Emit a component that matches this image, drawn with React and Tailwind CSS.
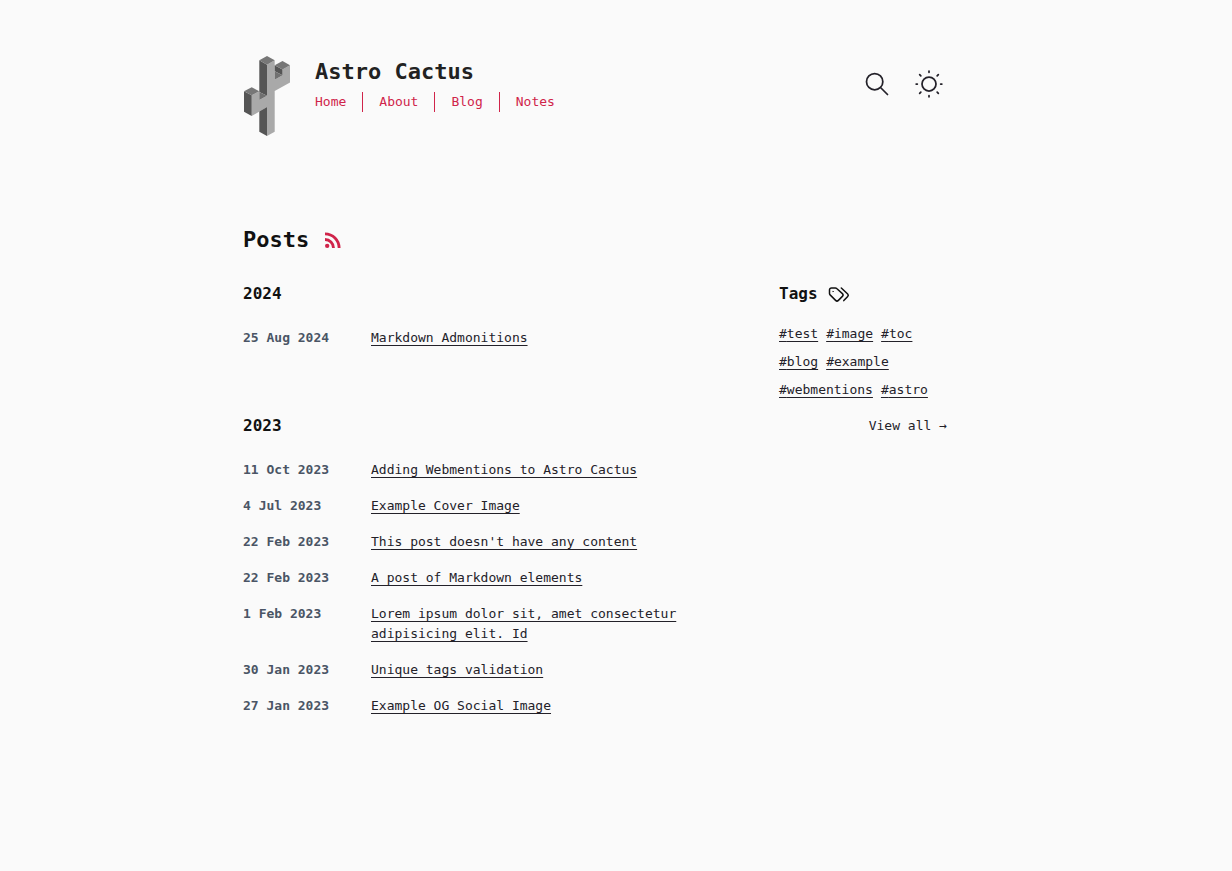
const FONT = "font-['DejaVu_Sans_Mono','Liberation_Mono',monospace]";

const nav = ["Home", "About", "Blog", "Notes"];

const groups = [
  { year: "2024", posts: [["25 Aug 2024", "Markdown Admonitions"]] },
  {
    year: "2023",
    posts: [
      ["11 Oct 2023", "Adding Webmentions to Astro Cactus"],
      ["4 Jul 2023", "Example Cover Image"],
      ["22 Feb 2023", "This post doesn't have any content"],
      ["22 Feb 2023", "A post of Markdown elements"],
      ["1 Feb 2023", "Lorem ipsum dolor sit, amet consectetur adipisicing elit. Id"],
      ["30 Jan 2023", "Unique tags validation"],
      ["27 Jan 2023", "Example OG Social Image"],
    ],
  },
];

const tags = ["test", "image", "toc", "blog", "example", "webmentions", "astro"];

const underlined = "underline decoration-1 underline-offset-3 [text-decoration-skip-ink:none]";

function Logo() {
  return (
    <svg viewBox="0 0 48 80" className="h-20 w-12 shrink-0" aria-hidden="true">
      <path fill="#a9a9a9" d="M24 8.700 31.700 4.300V23.700L39.500 19.300V13.500L47 9.300V26.500L31.700 35V75.700L24 80V51L8.700 60V39.300L16.300 35.300V44L24 39.800Z" />
      <path fill="#555" d="M16.300 4.300 24 8.700V39.800L16.300 36ZM16.300 55.500 24 51V80l-7.700-4.300Z" />
      <path fill="#555" d="M1 35.300 8.700 39.300V60L1 55.700Z" />
      <path fill="#555" d="M31.700 9.300 39.500 13.500v5.800L31.700 15.300Z" />
      <path fill="#777" d="M16.300 4.300 24 0l7.700 4.300L24 8.700ZM31.700 9.300 39.500 5 47 9.300 39.500 13.500ZM1 35.300 8.700 31.300l7.600 4L8.700 39.300Z" />
      <path fill="#707070" d="M16.300 36 24 39.800 16.300 44ZM31.700 15.300 39.500 19.300 31.700 23.700Z" />
    </svg>
  );
}

function SearchIcon() {
  return (
    <svg viewBox="0 0 24 24" className="size-7" fill="none" stroke="currentColor" strokeWidth="1.5" strokeLinecap="round" strokeLinejoin="round" aria-hidden="true">
      <path d="M3 10a7 7 0 1 0 14 0 7 7 0 1 0-14 0M21 21l-6-6" />
    </svg>
  );
}

function SunIcon() {
  return (
    <svg viewBox="0 0 24 24" className="size-7" fill="none" stroke="currentColor" strokeWidth="1.5" strokeLinecap="round" strokeLinejoin="round" aria-hidden="true">
      <circle cx="12" cy="12" r="6" />
      <path d="M22 12h1M12 2V1M12 23v-1M20 20l-1-1M20 4l-1 1M4 20l1-1M4 4l1 1M1 12h1" />
    </svg>
  );
}

function RssIcon() {
  return (
    <svg viewBox="0 0 24 24" className="size-6" fill="currentColor" aria-hidden="true">
      <circle cx="6.180" cy="17.820" r="2.180" />
      <path d="M4 4.440A15.560 15.560 0 0 1 19.560 20h-2.830A12.730 12.730 0 0 0 4 7.270V4.440m0 5.660a9.900 9.900 0 0 1 9.900 9.900h-2.830A7.070 7.070 0 0 0 4 12.930V10.100Z" />
    </svg>
  );
}

function TagsIcon() {
  return (
    <svg viewBox="0 0 24 24" className="size-6" fill="none" stroke="currentColor" strokeWidth="1.5" strokeLinecap="round" strokeLinejoin="round" aria-hidden="true">
      <path d="M3.500 8v3.500a2 2 0 0 0 .6 1.400l5.500 5.500a2 2 0 0 0 2.800 0l4-4a2 2 0 0 0 0-2.800L10.700 6.500A2 2 0 0 0 9.300 5.900H5.500A2 2 0 0 0 3.500 8" />
      <path d="m17.800 18.600 3.900-4.200a1.700 1.700 0 0 0 0-2.400L15.300 6" />
      <circle cx="7" cy="9.500" r=".4" strokeWidth=".5" />
    </svg>
  );
}

export default function App() {
  return (
    <div className={`min-h-screen bg-[#fafafa] text-[13px] leading-5 text-[#232129] sm:pr-[42px] ${FONT}`}>
      <div className="mx-auto max-w-3xl px-8 pt-14 pb-16">
        <header className="mb-22 flex items-start gap-6">
          <Logo />
          <div className="flex flex-col gap-1">
            <a href="#home" className="text-[22px] leading-8 font-bold text-[#222]">
              Astro Cactus
            </a>
            <nav className="-mx-4 flex text-[#d0244a]">
              {nav.map((label) => (
                <a key={label} href={`#${label.toLowerCase()}`} className="border-r border-[#d0244a] px-4 last:border-r-0">
                  {label}
                </a>
              ))}
            </nav>
          </div>
          <div className="ml-auto flex h-14 items-center gap-4">
            <button type="button" aria-label="Search" className="grid size-9 place-items-center">
              <SearchIcon />
            </button>
            <button type="button" aria-label="Toggle theme" className="grid size-9 place-items-center">
              <SunIcon />
            </button>
          </div>
        </header>

        <main>
          <div className="mb-6 flex items-center gap-3">
            <h1 className="text-[22px] leading-8 font-bold text-[#111]">Posts</h1>
            <a href="#rss" aria-label="RSS feed" className="text-[#d0244a]">
              <RssIcon />
            </a>
          </div>
          <div className="grid items-start gap-x-8 gap-y-16 sm:grid-cols-[3fr_1fr]">
            <div className="flex flex-col gap-16">
              {groups.map(({ year, posts }) => (
                <section key={year}>
                  <h2 className="text-[16px] leading-7 font-bold text-[#111]">{year}</h2>
                  <ul className="mt-5 flex flex-col gap-4">
                    {posts.map(([date, title]) => (
                      <li key={title} className="flex gap-2">
                        <time className="w-30 shrink-0 font-bold text-[#4a5565]">{date}</time>
                        <div>
                          <a href="#post" className={underlined}>
                            {title}
                          </a>
                        </div>
                      </li>
                    ))}
                  </ul>
                </section>
              ))}
            </div>
            <aside>
              <h2 className="flex items-center gap-2 text-[16px] leading-7 font-bold text-[#111]">
                Tags
                <TagsIcon />
              </h2>
              <ul className="mt-4 flex flex-wrap gap-2">
                {tags.map((tag) => (
                  <li key={tag}>
                    <a href={`#${tag}`} className={underlined}>
                      #{tag}
                    </a>
                  </li>
                ))}
              </ul>
              <div className="mt-4 text-right">
                <a href="#tags">View all →</a>
              </div>
            </aside>
          </div>
        </main>
      </div>
    </div>
  );
}
